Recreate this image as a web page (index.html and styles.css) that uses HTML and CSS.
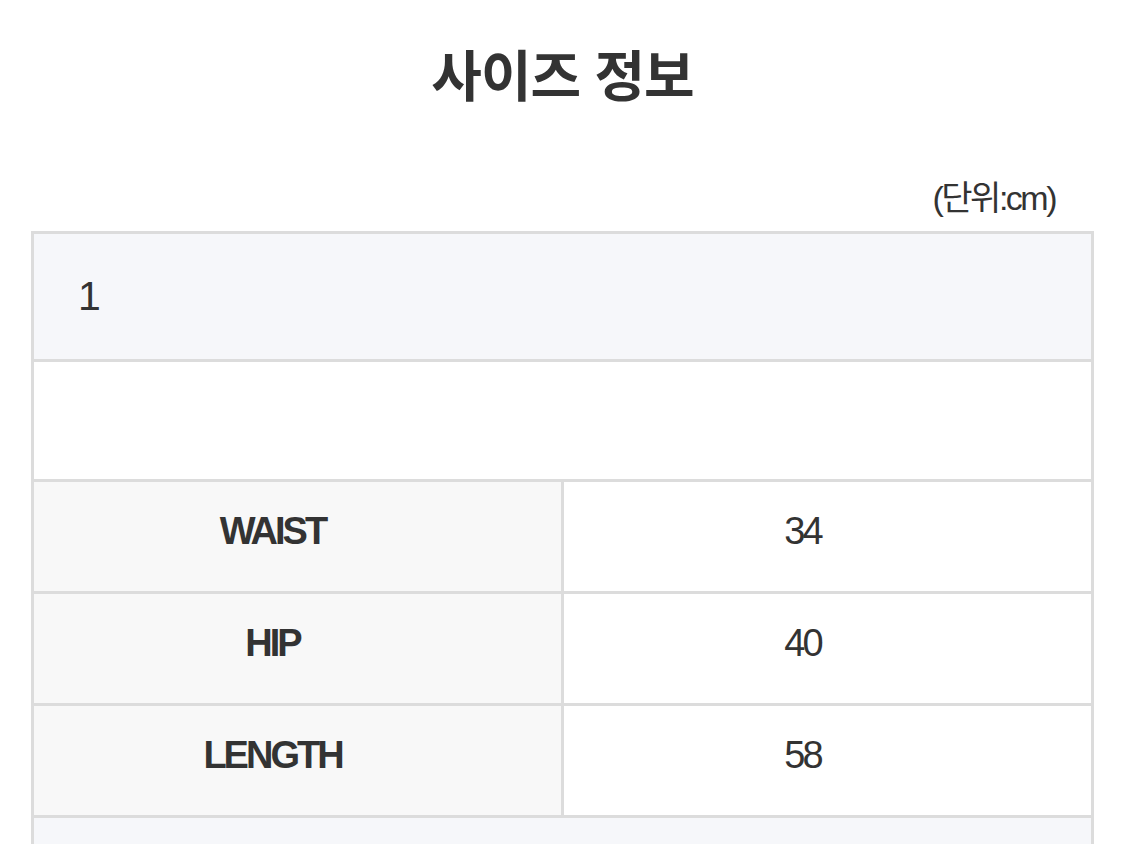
FILE: index.html
```html
<!DOCTYPE html>
<html lang="ko">
<head>
<meta charset="utf-8">
<link rel="stylesheet" href="styles.css">
</head>
<body>
<div class="page">
  <h1 class="title">사이즈 정보</h1>
  <div class="unit">(단위:cm)</div>
  <table class="size-table">
    <tr class="head"><td colspan="2" class="head-cell">1</td></tr>
    <tr class="blank"><td colspan="2"></td></tr>
    <tr class="row"><th>WAIST</th><td>34</td></tr>
    <tr class="row"><th>HIP</th><td>40</td></tr>
    <tr class="row"><th>LENGTH</th><td>58</td></tr>
    <tr class="head"><td colspan="2" class="head-cell"></td></tr>
  </table>
</div>
</body>
</html>
```
FILE: styles.css
```css
html, body {
  margin: 0;
  padding: 0;
  background: #ffffff;
}
body {
  font-family: "Liberation Sans", "Noto Sans CJK KR", sans-serif;
  color: #333333;
}
.page {
  width: 1125px;
  overflow: hidden;
}
.title {
  margin: 0;
  padding-top: 36px;
  height: 72px;
  line-height: 72px;
  text-align: center;
  font-family: "Noto Sans CJK KR", sans-serif;
  font-weight: 700;
  font-size: 55px;
  color: #333333;
  letter-spacing: -1px;
}
.unit {
  margin-top: 70px;
  padding-right: 70px;
  text-align: right;
  font-size: 34px;
  line-height: 40px;
  letter-spacing: -2.5px;
  color: #333333;
  font-family: "Liberation Sans", "Noto Sans CJK KR", sans-serif;
}
.size-table {
  margin: 13px 0 0 31px;
  width: 1063px;
  border-collapse: collapse;
  table-layout: fixed;
  border: 3px solid #dcdcdc;
}
.size-table td,
.size-table th {
  border: 3px solid #dcdcdc;
  padding: 0;
}
.head-cell {
  background: #f6f7fa;
  height: 125px;
  padding-left: 44px !important;
  font-size: 41px;
  text-align: left;
  color: #333333;
}
.blank td {
  height: 117px;
  background: #ffffff;
}
.row th,
.row td {
  height: 99px;
  padding-right: 50px !important;
  padding-bottom: 10px !important;
  text-align: center;
  font-size: 38px;
  letter-spacing: -3px;
  color: #333333;
}
.row th {
  width: 526px;
  background: #f8f8f8;
  font-weight: 700;
}
.row td {
  background: #ffffff;
  font-weight: 400;
}
```
